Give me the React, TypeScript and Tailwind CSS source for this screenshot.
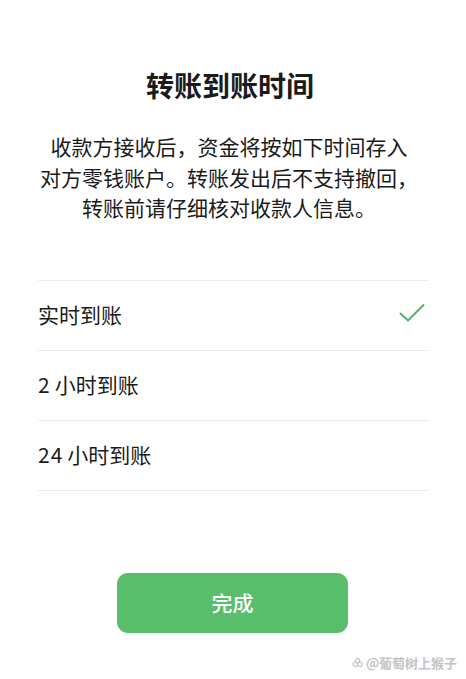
import React from "react";

const options = [
  { num: "", label: "实时到账", checked: true },
  { num: "2", label: "小时到账", checked: false },
  { num: "24", label: "小时到账", checked: false },
];

function Check() {
  return (
    <svg width="26" height="20" viewBox="0 0 26 20" fill="none">
      <path
        d="M1.5 10.5 L9 17.5 L24.5 2"
        stroke="#5aae6c"
        strokeWidth="2"
        strokeLinecap="round"
        strokeLinejoin="round"
      />
    </svg>
  );
}

export default function App() {
  return (
    <div
      className="relative w-[466px] h-[679px] bg-white overflow-hidden text-[#1b1b1b]"
      style={{ fontFamily: '"Noto Sans CJK SC", "Noto Sans", sans-serif' }}
    >
      <div className="flex flex-col items-center pt-[67px]">
        <h1 className="text-[28px] leading-[36px] font-bold pr-[6px]">转账到账时间</h1>
        <p className="mt-[28px] text-[21px] leading-[30.5px] text-center pr-[8px]">
          收款方接收后，资金将按如下时间存入
          <br />
          对方零钱账户。转账发出后不支持撤回，
          <br />
          转账前请仔细核对收款人信息。
        </p>
      </div>

      <div className="mt-[57px] mx-[38px] border-t border-[#ececec]">
        {options.map((o) => (
          <div
            key={o.num + o.label}
            className="h-[70px] flex items-center justify-between border-b border-[#ececec]"
          >
            <span className="text-[21px] flex items-center">
              {o.num && <span className="mr-[4px] tracking-[1px]">{o.num}</span>}
              <span>{o.label}</span>
            </span>
            {o.checked && (
              <span className="mr-[3px] mt-[-4px]">
                <Check />
              </span>
            )}
          </div>
        ))}
      </div>

      <div className="flex justify-center mt-[82px] pr-[1px]">
        <button className="w-[231px] h-[60px] rounded-[11px] bg-[#58be6b] text-white text-[21px] font-medium">
          完成
        </button>
      </div>

      <div
        className="absolute right-[9px] bottom-[7px] flex items-center gap-[3px] text-[13px] font-bold text-[#c4c4c4]"
        style={{ textShadow: "0 0 1px #fff, 0 0 1px #fff" }}
      >
        <svg width="11" height="11" viewBox="0 0 12 12" fill="none" stroke="#c4c4c4" strokeWidth="1.2">
          <circle cx="6" cy="4" r="2.5" />
          <circle cx="3.5" cy="8" r="2.5" />
          <circle cx="8.5" cy="8" r="2.5" />
        </svg>
        <span>@葡萄树上猴子</span>
      </div>
    </div>
  );
}
